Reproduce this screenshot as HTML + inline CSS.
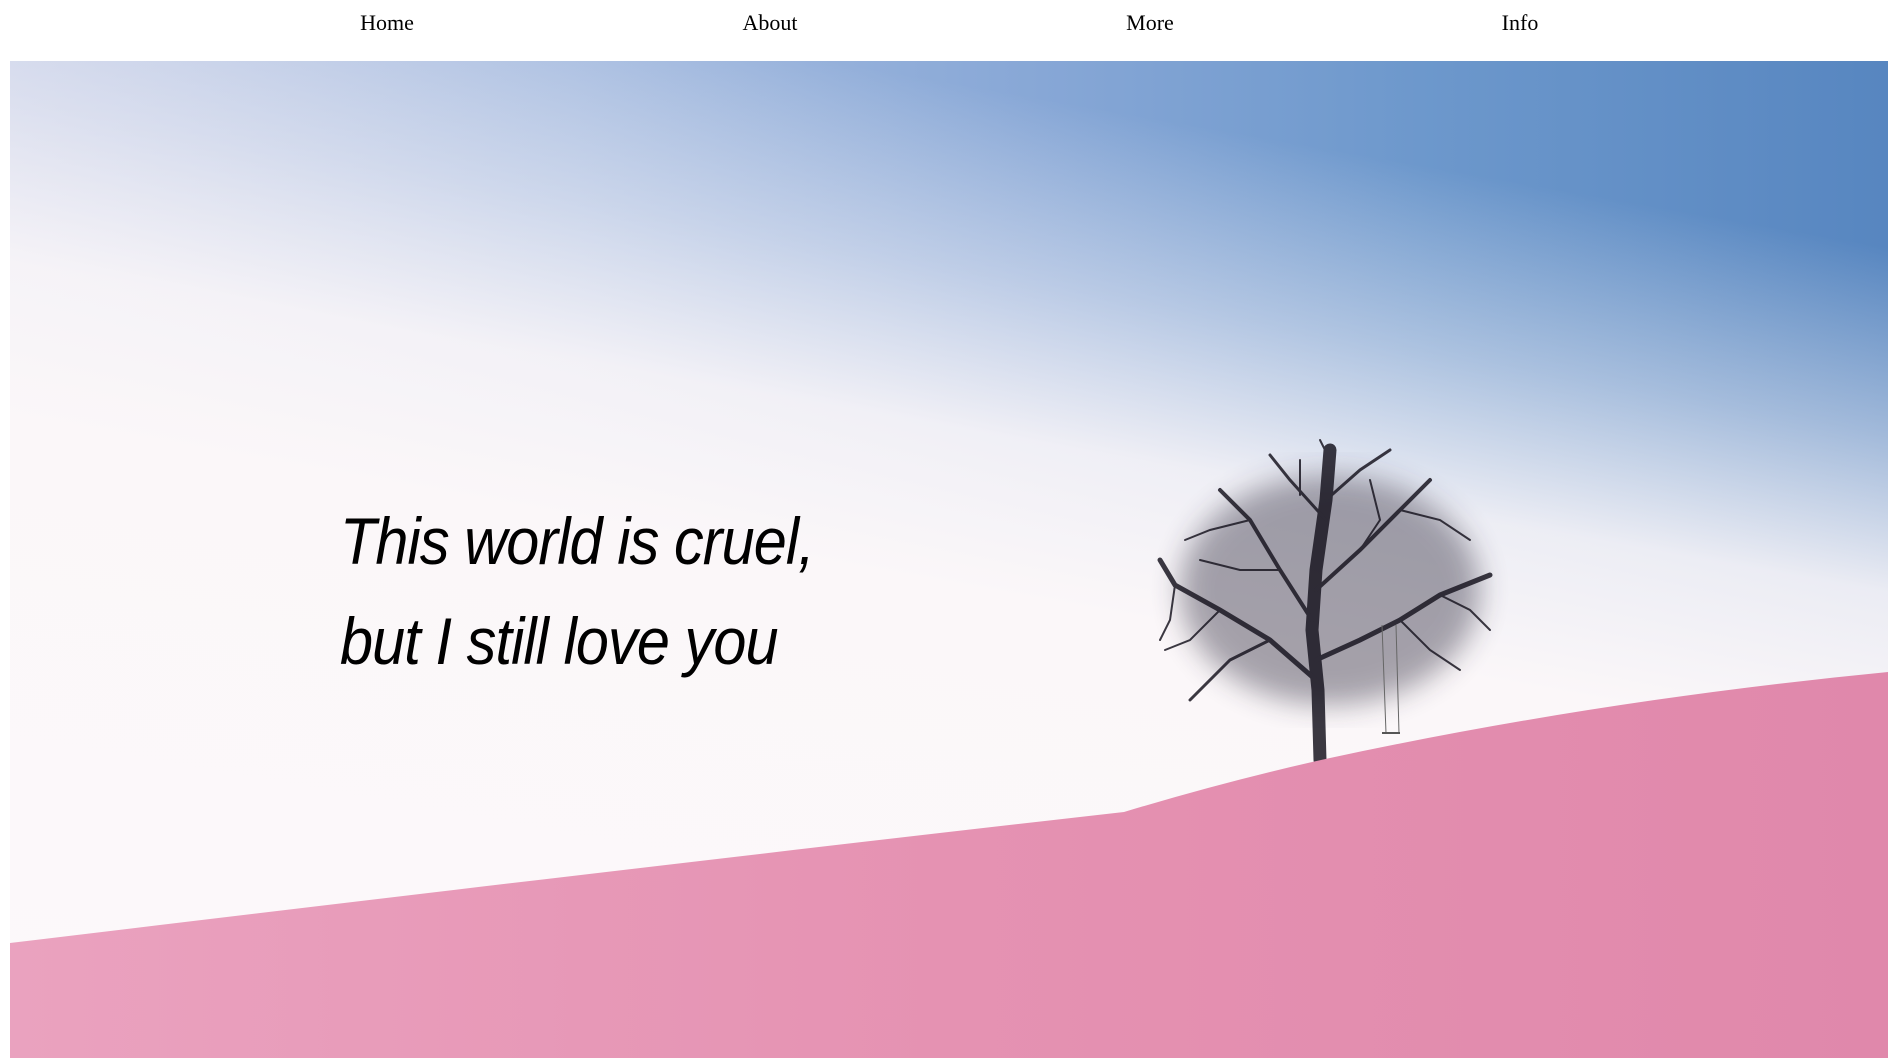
<!DOCTYPE html>
<html><head><meta charset="utf-8"><style>
html,body{margin:0;padding:0;width:1896px;height:1058px;overflow:hidden;background:#fff}
nav{position:absolute;top:0;left:0;width:1896px;height:61px}
nav span{position:absolute;top:10px;font:22px "Liberation Serif",serif;color:#000;transform:translateX(-50%)}
#hero{position:absolute;left:10px;top:61px;width:1878px;height:997px;overflow:hidden;
background:
linear-gradient(190deg,rgba(251,247,249,0) 14%,rgba(251,247,249,0.45) 28%,rgba(251,247,249,0.9) 40%,#fbf7f9 52%,#fcf9fa 100%),
linear-gradient(90deg,#c3cde7 0%,#a6bce0 30%,#87a7d6 55%,#6d98cc 75%,#5786c0 100%);}
.t{position:absolute;left:330px;font:italic 66px "Liberation Sans",sans-serif;color:#000;letter-spacing:-1px;transform:scaleX(0.9);transform-origin:left}
</style></head><body>
<nav><span style="left:387px">Home</span><span style="left:770px">About</span><span style="left:1150px">More</span><span style="left:1520px">Info</span></nav>
<div id="hero">
<svg width="1878" height="997" style="position:absolute;left:0;top:0">
<defs>
<linearGradient id="g" x1="0" y1="0" x2="1" y2="0"><stop offset="0" stop-color="#eaa2bf"/><stop offset="0.5" stop-color="#e592b2"/><stop offset="1" stop-color="#e088ab"/></linearGradient>
<filter id="b"><feGaussianBlur stdDeviation="14"/></filter>
</defs>
<g transform="translate(-10,-61)">
<ellipse cx="1330" cy="590" rx="150" ry="115" fill="#2e2a3c" opacity="0.42" filter="url(#b)"/>
<g stroke="#1a1722" fill="none" stroke-linecap="round" opacity="0.85">
<path d="M1320 760 L1318 690 L1312 630 L1316 570 L1326 500 L1330 450" stroke-width="13"/>
<path d="M1316 680 L1270 640 L1220 610 L1175 585 L1160 560" stroke-width="5"/>
<path d="M1316 660 L1360 640 L1400 620 L1440 595 L1490 575" stroke-width="5"/>
<path d="M1312 620 L1280 570 L1250 520 L1220 490" stroke-width="4"/>
<path d="M1316 590 L1360 550 L1400 510 L1430 480" stroke-width="4"/>
<path d="M1326 520 L1290 480 L1270 455" stroke-width="3"/>
<path d="M1326 500 L1360 470 L1390 450" stroke-width="3"/>
<path d="M1270 640 L1230 660 L1190 700" stroke-width="3"/>
<path d="M1400 620 L1430 650 L1460 670" stroke-width="2"/>
<path d="M1220 610 L1190 640 L1165 650" stroke-width="2"/>
<path d="M1250 520 L1210 530 L1185 540" stroke-width="2"/>
<path d="M1400 510 L1440 520 L1470 540" stroke-width="2"/>
<path d="M1360 550 L1380 520 L1370 480" stroke-width="2"/>
<path d="M1280 570 L1240 570 L1200 560" stroke-width="2"/>
<path d="M1440 595 L1470 610 L1490 630" stroke-width="2"/>
<path d="M1175 585 L1170 620 L1160 640" stroke-width="2"/>
<path d="M1330 460 L1320 440" stroke-width="2"/>
<path d="M1300 495 L1300 460" stroke-width="2"/>
</g>
<line x1="1382" y1="625" x2="1386" y2="733" stroke="#666" stroke-width="1"/>
<line x1="1396" y1="625" x2="1399" y2="733" stroke="#666" stroke-width="1"/>
<path d="M1382 733 L1400 733" stroke="#555" stroke-width="2"/>
<path d="M10 943 Q700 860 1124 812 Q1230 780 1330 758 Q1600 700 1888 672 L1888 1058 L10 1058 Z" fill="url(#g)"/>
</g>
</svg>
<div class="t" style="top:442px">This world is cruel,</div>
<div class="t" style="top:542px">but I still love you</div>
</div>
</body></html>
